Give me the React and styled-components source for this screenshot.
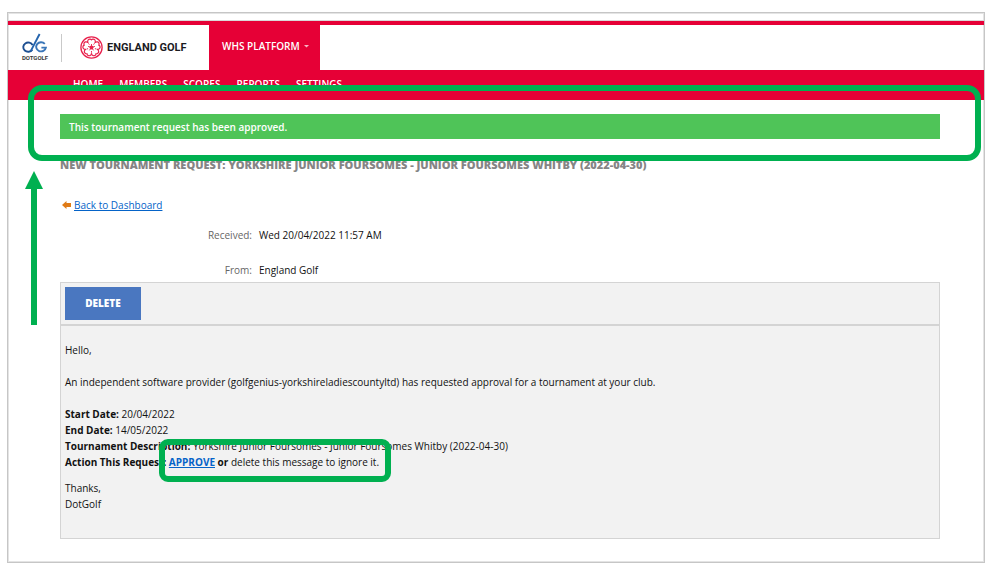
import React from "react";
import styled, { createGlobalStyle } from "styled-components";

const GlobalStyle = createGlobalStyle`
  *, *::before, *::after { box-sizing: border-box; }
  body {
    margin: 0;
    background: #fff;
    color: #111;
    font: 10px/16px "Open Sans", "Noto Sans", sans-serif;
  }
`;

const Frame = styled.div`
  position: relative;
  margin: 12px 14px 15px 7px;
  border: 1px solid #c6c6c6;
  box-shadow: inset 0 0 0 1px #e4e4e4;
  padding: 7px 0 23px;
`;

const Header = styled.header`
  display: flex;
  height: 50px;
  border-top: 1px solid #d9d9d9;
  background: linear-gradient(#e60036, #e60036) top / 100% 4px no-repeat;
  padding-top: 4px;
`;

const Brands = styled.div`
  display: flex;
  align-items: center;
  width: 201px;
  padding-left: 13px;
`;

const DotGolf = styled.a`
  width: 28px;
  color: #3a3a3a;
  font: 700 6px/8px Roboto, sans-serif;
  text-align: center;
  text-decoration: none;
  svg { display: block; }
`;

const Divider = styled.span`
  width: 1px;
  height: 28px;
  margin: 0 18px 0 12px;
  background: #c9c9c9;
`;

const EnglandGolf = styled.a`
  display: flex;
  align-items: center;
  gap: 4px;
  color: #1b1b1f;
  font: 700 11px/16px Roboto, sans-serif;
  text-decoration: none;
  white-space: nowrap;
`;

const Platform = styled.button`
  display: flex;
  align-items: center;
  gap: 4px;
  width: 111px;
  border: 0;
  padding: 0 10px 3px 13px;
  background: #e60036;
  color: #fff;
  font: 600 10px/16px "Open Sans", sans-serif;
  white-space: nowrap;
  svg { flex: none; }
`;

const Nav = styled.nav`
  display: flex;
  gap: 16px;
  height: 30px;
  padding: 6px 0 0 65px;
  background: #e60036;
`;

const NavLink = styled.a`
  color: #fff;
  font-weight: 600;
  text-decoration: none;
`;

const Content = styled.main`
  padding: 14px 44px 0 52px;
`;

const Alert = styled.div`
  padding: 5px 9px 4px;
  background: #4fc458;
  color: #fff;
  font-weight: 600;
`;

const Title = styled.h1`
  margin: 18px 0 24px;
  color: #858585;
  font-size: 11px;
  line-height: 16px;
  font-weight: 800;
  text-transform: uppercase;
`;

const Link = styled.a`
  color: #0563c8;
`;

const Back = styled.div`
  display: flex;
  align-items: center;
  gap: 3px;
  padding-left: 2px;
`;

const Details = styled.dl`
  display: grid;
  grid-template-columns: 192px 1fr;
  gap: 19px 7px;
  margin: 14px 0 4px;
  dt { color: #666; text-align: right; }
  dd { margin: 0; }
`;

const Toolbar = styled.div`
  border: 1px solid #d4d4d4;
  padding: 4px;
  background: #f2f2f2;
`;

const DeleteButton = styled.button`
  display: block;
  width: 76px;
  height: 33px;
  border: 0;
  padding: 0 6px 2px;
  background: #4a77c0;
  color: #fff;
  font: 800 10px/16px "Open Sans", sans-serif;
`;

const Message = styled.article`
  border: 1px solid #d4d4d4;
  padding: 16px 4px 26px;
  background: #f2f2f2;
  p { margin: 0 0 16px; }
  p + footer { margin-top: -6px; }
`;

const ActionLine = styled.span`
  position: relative;
  display: inline-block;
`;

const BannerCallout = styled.div`
  position: absolute;
  z-index: 2;
  top: 72px;
  left: 20px;
  right: 3px;
  height: 76px;
  border: 6px solid #00b050;
  border-radius: 14px;
  pointer-events: none;
`;

const ActionCallout = styled.span`
  position: absolute;
  top: -15px;
  left: 94px;
  width: 232px;
  height: 43px;
  border: 6px solid #00b050;
  border-radius: 9px;
  pointer-events: none;
`;

const Arrow = styled.svg`
  position: absolute;
  top: 158px;
  left: 17px;
`;

const petals = [0, 72, 144, 216, 288];

function Rose() {
  return (
    <svg width="23" height="23" viewBox="0 0 23 23" fill="none" stroke="#e8224d" aria-hidden="true">
      <circle cx="11.5" cy="11.5" r="10.6" strokeWidth="1.3" />
      {petals.map((a) => (
        <g key={a} transform={`rotate(${a} 11.5 11.5)`}>
          <path d="M7.9 6.9C7 4.5 8.5 2.8 10.2 3.1c.6.1 1 .4 1.3.7.3-.3.7-.6 1.3-.7 1.7-.3 3.2 1.4 2.3 3.8" strokeWidth="1.2" />
          <path d="M11.5 10.5V8" strokeWidth=".9" />
          <path d="M8.4 7.3l1 1.3" strokeWidth=".9" />
        </g>
      ))}
      <circle cx="11.5" cy="11.5" r="1.9" fill="#e8224d" stroke="none" />
    </svg>
  );
}

function DotGolfMark() {
  return (
    <svg width="28" height="21" viewBox="0 0 28 21" fill="none" strokeWidth="1.9" aria-hidden="true">
      <path d="M11.6 12.2a4.9 4.6 0 1 0-.3 4.4" stroke="#1d4f91" />
      <path d="M18.6 1 9.6 18.4" stroke="#2464ad" />
      <path d="M23.8 10.8a4.9 4.6 0 1 0 1.1 3.8h-4.5" stroke="#3975b8" />
    </svg>
  );
}

const sections = ["HOME", "MEMBERS", "SCORES", "REPORTS", "SETTINGS"];

export default function App() {
  return (
    <>
      <GlobalStyle />
      <Frame>
        <Header>
          <Brands>
            <DotGolf href="#dotgolf"><DotGolfMark />DOTGOLF</DotGolf>
            <Divider />
            <EnglandGolf href="#england"><Rose />ENGLAND GOLF</EnglandGolf>
          </Brands>
          <Platform type="button">
            WHS PLATFORM
            <svg width="5" height="3" viewBox="0 0 5 3" aria-hidden="true"><path d="M0 0h5L2.5 2.5z" fill="#f7b5c4" /></svg>
          </Platform>
        </Header>
        <Nav>
          {sections.map((name) => <NavLink key={name} href={`#${name.toLowerCase()}`}>{name}</NavLink>)}
        </Nav>
        <Content>
          <Alert role="status">This tournament request has been approved.</Alert>
          <Title>New Tournament Request: Yorkshire Junior Foursomes - Junior Foursomes Whitby (2022-04-30)</Title>
          <Back>
            <svg width="9" height="8" viewBox="0 0 9 8" aria-hidden="true"><path d="M0 4 4.5 0v2H9v4H4.5v2z" fill="#e07b16" /></svg>
            <Link href="#dashboard">Back to Dashboard</Link>
          </Back>
          <Details>
            <dt>Received:</dt>
            <dd>Wed 20/04/2022 11:57 AM</dd>
            <dt>From:</dt>
            <dd>England Golf</dd>
          </Details>
          <Toolbar><DeleteButton type="button">DELETE</DeleteButton></Toolbar>
          <Message>
            <p>Hello,</p>
            <p>An independent software provider (golfgenius-yorkshireladiescountyltd) has requested approval for a tournament at your club.</p>
            <p>
              <b>Start Date:</b> 20/04/2022<br />
              <b>End Date:</b> 14/05/2022<br />
              <b>Tournament Description:</b> Yorkshire Junior Foursomes - Junior Foursomes Whitby (2022-04-30)<br />
              <ActionLine>
                <b>Action This Request: <Link href="#approve">APPROVE</Link> or</b> delete this message to ignore it.
                <ActionCallout />
              </ActionLine>
            </p>
            <footer>Thanks,<br />DotGolf</footer>
          </Message>
        </Content>
        <BannerCallout />
        <Arrow width="18" height="154" viewBox="0 0 18 154" aria-hidden="true">
          <path d="M9 0l9 18h-6v136H6V18H0z" fill="#00b050" />
        </Arrow>
      </Frame>
    </>
  );
}
